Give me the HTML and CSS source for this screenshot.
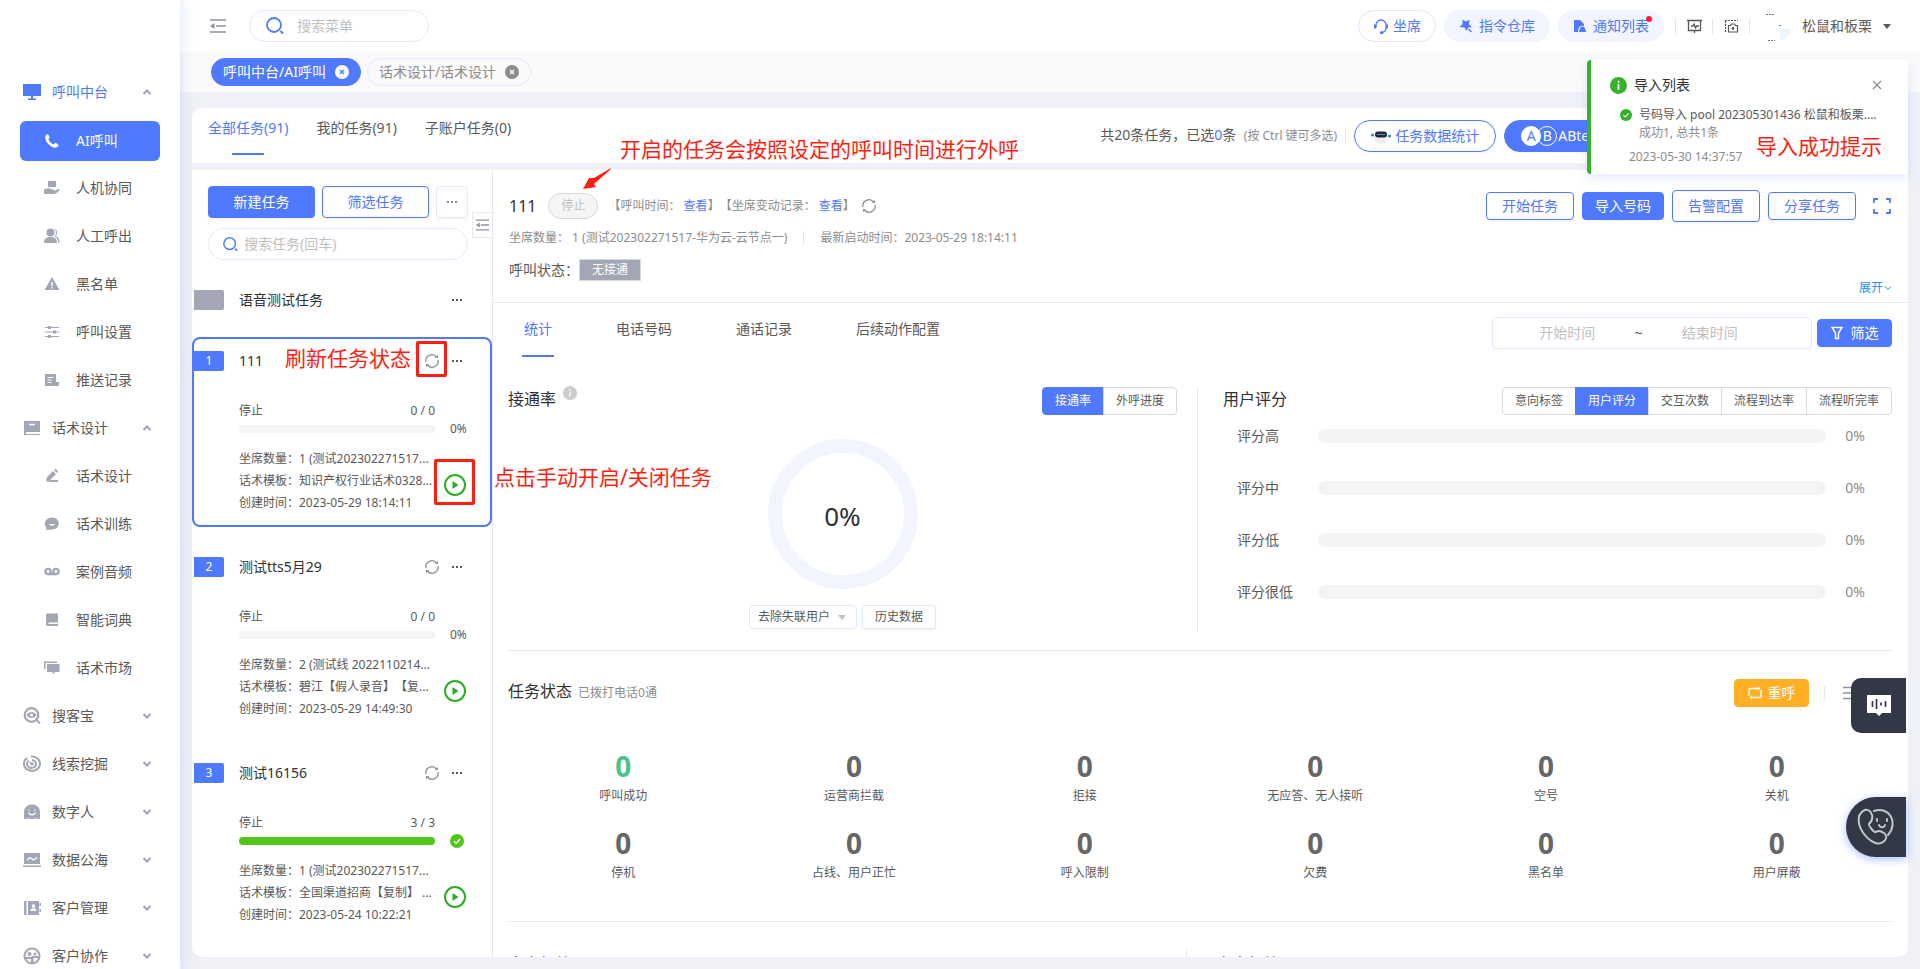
FILE: index.html
```html
<!DOCTYPE html>
<html lang="zh-CN">
<head>
<meta charset="utf-8">
<title>AI呼叫</title>
<link rel="stylesheet" href="styles.css">
</head>
<body>
<svg class="defs" aria-hidden="true">
  <symbol id="i-up" viewBox="0 0 10 10"><path d="M1.5 7 5 3.5 8.5 7" fill="none" stroke="currentColor" stroke-width="2"/></symbol>
  <symbol id="i-down" viewBox="0 0 10 10"><path d="M1.5 3 5 6.500 8.500 3" fill="none" stroke="currentColor" stroke-width="2"/></symbol>
  <symbol id="i-dots" viewBox="0 0 12 4"><path d="M1 1h2v2H1zM5 1h2v2H5zM9 1h2v2H9z" fill="currentColor"/></symbol>
  <symbol id="i-search" viewBox="0 0 18 18"><circle cx="8" cy="8" r="7" fill="none" stroke="currentColor" stroke-width="1.800"/><path d="m14.500 14 2.500 2.500" stroke="currentColor" stroke-width="2"/></symbol>
  <symbol id="i-refresh" viewBox="0 0 16 16"><path d="M2 9a6 6 0 0 1 10.500-5M14 7a6 6 0 0 1-10.500 5" fill="none" stroke="currentColor" stroke-width="1.300"/><path d="M11 4.800 14 5V2zM5 11.200 2 11v3z" fill="currentColor"/></symbol>
  <symbol id="i-fold" viewBox="0 0 16 14"><path d="M0 1h16M6 7h10M0 13h16" stroke="currentColor" stroke-width="1.600"/><path d="M4.500 4v6L0 7z" fill="currentColor"/></symbol>
  <symbol id="i-play" viewBox="0 0 22 22"><circle cx="11" cy="11" r="10" fill="none" stroke="currentColor" stroke-width="2"/><path d="M8.500 7v8l6-4z" fill="currentColor"/></symbol>
  <symbol id="i-ok" viewBox="0 0 14 14"><circle cx="7" cy="7" r="7" fill="currentColor"/><path d="m4 7.200 2.200 2.200L10 5" fill="none" stroke="#fff" stroke-width="1.300"/></symbol>
  <symbol id="i-info" viewBox="0 0 16 16"><circle cx="8" cy="8" r="8" fill="currentColor"/><path d="M7.200 3.500h1.600v1.800H7.200zM7.200 6.500h1.600V12H7.200z" fill="#fff"/></symbol>
</svg>

<div class="app">
  <nav class="sidebar">
    <a class="group group-on" href="#"><svg class="gi" viewBox="0 0 18 18"><path d="M0 1h18v12H0zM8 13h2v3H8zM5 15.500h8V17H5z" fill="currentColor"/></svg><span>呼叫中台</span><svg class="chev"><use href="#i-up"/></svg></a>
    <a class="item item-on" href="#"><svg class="si" viewBox="0 0 16 16"><path d="M1.500 2.500C2 2 3 1 3.600 1.200c.9.500 1.900 2.400 2 3.100 0 .7-1.200 1.300-1.100 2 .4 1.700 3 4.400 4.800 4.900.8.200 1.500-1.100 2.200-1.100.8.100 2.700 1.300 3 2 .2.700-.9 1.800-1.500 2.200C8.500 16.500-.5 8.500 1.500 2.500z" fill="currentColor"/></svg><span>AI呼叫</span></a>
    <a class="item" href="#"><svg class="si" viewBox="0 0 16 16"><path d="M4 1h8v6H4zM0 9h2c2-1 4-.8 5.500.5H10c1 0 1 1.500 0 1.500H6.500h4L14.500 9c1 0 1.500.8.800 1.500-2 2-3.800 3.500-5.300 3.500H0z" fill="currentColor"/></svg><span>人机协同</span></a>
    <a class="item" href="#"><svg class="si" viewBox="0 0 16 16"><circle cx="6.500" cy="4.500" r="4" fill="currentColor"/><path d="M0 15c0-4 2-6 6.500-6S13 11 13 15zM10.500 1c3 .5 3.500 5 1 7 2.500.5 4 3 4 6.500H14c0-3-1-5-3.500-6 2-2 2-5.500 0-7.500z" fill="currentColor"/></svg><span>人工呼出</span></a>
    <a class="item" href="#"><svg class="si" viewBox="0 0 16 16"><path d="m8 1 7.500 13H.5z" fill="currentColor"/><path d="M8 6v4M8 11v1.500" stroke="#fff" stroke-width="1.400"/></svg><span>黑名单</span></a>
    <a class="item" href="#"><svg class="si" viewBox="0 0 16 16"><path d="M1 3.500h14M1 8h14M1 12.500h14" stroke="currentColor" stroke-width="1.200"/><path d="M4 2h3v3H4zM9 6.500h3v3H9zM4 11h3v3H4z" fill="currentColor"/></svg><span>呼叫设置</span></a>
    <a class="item" href="#"><svg class="si" viewBox="0 0 16 16"><path d="M1 2h11v8h3v2.500c0 1-.5 1.500-1.500 1.500H1z" fill="currentColor"/><path d="M3.500 5.500h6M3.500 8h4M3.500 10.500h4" stroke="#fff"/></svg><span>推送记录</span></a>
    <a class="group" href="#"><svg class="gi" viewBox="0 0 18 18"><path d="M1 2h16v11H1z" fill="currentColor"/><path d="M1 13v3h16v-1H3v-2z" fill="currentColor"/><path d="M6 5.500h6" stroke="#fff" stroke-width="1.500"/></svg><span>话术设计</span><svg class="chev"><use href="#i-up"/></svg></a>
    <a class="item" href="#"><svg class="si" viewBox="0 0 16 16"><path d="m2 13 1-4 6-6 3 3-6 6zM10 2l1.500-1.200 2.700 2.700L13 5zM6 12h8v2H2z" fill="currentColor"/></svg><span>话术设计</span></a>
    <a class="item" href="#"><svg class="si" viewBox="0 0 16 16"><path d="M8 1.500c9 0 9 12 0 12L2 14l.5-2C-1.500 7.500 2 1.500 8 1.500z" fill="currentColor"/><path d="M5 8c1.500 2.500 4.500 2.500 6 0z" fill="#fff"/></svg><span>话术训练</span></a>
    <a class="item" href="#"><svg class="si" viewBox="0 0 16 16"><g fill="none" stroke="currentColor" stroke-width="2.400"><circle cx="4" cy="7.500" r="2.600"/><circle cx="12" cy="7.500" r="2.600"/></g><path d="M4 9h8v2.300H4z" fill="currentColor"/></svg><span>案例音频</span></a>
    <a class="item" href="#"><svg class="si" viewBox="0 0 16 16"><path d="M2 2.500C2 2 2.500 1.500 3 1.500h11v9H4.500v1.500H14V14H4c-1.500 0-2-.8-2-2z" fill="currentColor"/></svg><span>智能词典</span></a>
    <a class="item" href="#"><svg class="si" viewBox="0 0 16 16"><path d="M3 4h12.500v8H11l-1.500 2L8 12H3zM0 1.500h13V3H1.500v6H0z" fill="currentColor"/></svg><span>话术市场</span></a>
    <a class="group" href="#"><svg class="gi" viewBox="0 0 18 18"><circle cx="8.500" cy="8" r="6.800" fill="none" stroke="currentColor" stroke-width="2.200"/><path d="M3.500 8c2-4 8-4 10 0-2 4-8 4-10 0z" fill="currentColor"/><circle cx="8.500" cy="8" r="1.500" fill="#fff"/><path d="m13.500 13 3.500 3.500" stroke="currentColor" stroke-width="2"/></svg><span>搜客宝</span><svg class="chev"><use href="#i-down"/></svg></a>
    <a class="group" href="#"><svg class="gi" viewBox="0 0 18 18"><g fill="none" stroke="currentColor" stroke-width="2"><path d="M4 3a8 7.200 0 1 0 4-1.500"/><path d="M5 6.500A4.500 4 0 1 0 9 5"/></g><circle cx="9" cy="9" r="1.800" fill="currentColor"/><path d="m3 4 5 4" stroke="currentColor"/></svg><span>线索挖掘</span><svg class="chev"><use href="#i-down"/></svg></a>
    <a class="group" href="#"><svg class="gi" viewBox="0 0 18 18"><path d="M1 9c0-10 16-10 16 0v7h-3l-1.500-1L11 16H7l-1.500-1L4 16H1z" fill="currentColor"/><path d="M5.500 9.500c1.500 3 5.500 3 7 0M6 6.500v1M12 6.500v1" stroke="#fff" stroke-width="1.500" fill="none"/></svg><span>数字人</span><svg class="chev"><use href="#i-down"/></svg></a>
    <a class="group" href="#"><svg class="gi" viewBox="0 0 18 18"><path d="M1 2h16v11H1zM0 14.500h18V16H0z" fill="currentColor"/><path d="m4 9 3-2.500 3.500 2.500L14 6.500" stroke="#fff" stroke-width="1.300" fill="none"/></svg><span>数据公海</span><svg class="chev"><use href="#i-down"/></svg></a>
    <a class="group" href="#"><svg class="gi" viewBox="0 0 18 18"><path d="M1 2h2.500v14H1zM5 2h11v14H5zM16.500 4H18v3h-1.500zM16.500 10H18v3h-1.500z" fill="currentColor"/><circle cx="10.500" cy="7" r="1.700" fill="#fff"/><path d="M7.500 12c0-4 6-4 6 0z" fill="#fff"/></svg><span>客户管理</span><svg class="chev"><use href="#i-down"/></svg></a>
    <a class="group" href="#"><svg class="gi" viewBox="0 0 18 18"><circle cx="9" cy="9" r="7.500" fill="none" stroke="currentColor" stroke-width="2"/><circle cx="6.500" cy="7" r="2" fill="currentColor"/><circle cx="12" cy="7" r="1.600" fill="currentColor"/><path d="M2 11h7v6M9.500 15v-5h6" fill="none" stroke="currentColor" stroke-width="2"/></svg><span>客户协作</span><svg class="chev"><use href="#i-down"/></svg></a>
  </nav>

  <div class="page">
    <header class="topbar">
      <button class="plain fold" aria-label="收起菜单"><svg width="16" height="14"><use href="#i-fold"/></svg></button>
      <label class="search search-top"><svg width="18" height="18"><use href="#i-search"/></svg><input type="text" placeholder="搜索菜单" aria-label="搜索菜单"></label>
      <div class="tools">
        <button class="pill pill-line"><svg width="16" height="16" viewBox="0 0 16 16"><path d="M3 10V7a5 5 0 0 1 10 0v3c0 3-2 4.500-5 4.500" fill="none" stroke="currentColor" stroke-width="1.300"/><path d="M1 6.500h2v4H1zM13 6.500h2v4h-2zM7 13.500h3V16H7z" fill="currentColor"/></svg>坐席</button>
        <button class="pill"><svg width="14" height="14" viewBox="0 0 14 14"><path d="m3.500.5 3 2L11 1 9.800 5l3 3-3.600.4L7.500 12 5.500 8.500.5 8l3-3zM10 9.500l3 3-1 1-3-3z" fill="currentColor"/></svg>指令仓库</button>
        <button class="pill"><svg width="14" height="14" viewBox="0 0 14 14"><path d="M1 1h6l4 4v2C8 6 5.500 8 5.500 10L5 13H1z" fill="currentColor"/><path d="M6 12c1-1 .5-4.500 3.500-4.500S12 11 13 12v1H6z" fill="currentColor"/></svg>通知列表<i class="dot"></i></button>
        <div class="tool-icons">
          <button class="plain" aria-label="监控"><svg width="15" height="15" viewBox="0 0 15 15"><path d="M0 1.500h15M1.500 1.500v10h12v-10M4 7h2l1-2 1.500 4 1-2H12M7.500 12v2" fill="none" stroke="currentColor" stroke-width="1.300"/></svg></button>
          <button class="plain" aria-label="截图"><svg width="15" height="15" viewBox="0 0 15 15"><path d="M1 1.500h13M1.500 2v12" fill="none" stroke="currentColor" stroke-width="1.200" stroke-dasharray="2 1"/><path d="M4.500 6.500h2l1-1.500h3l1 1.500h2V13h-9z" fill="none" stroke="currentColor" stroke-width="1.200"/><circle cx="9" cy="9.500" r="1.400" fill="currentColor"/></svg></button>
        </div>
        <svg class="avatar" width="32" height="32" viewBox="0 0 32 32"><path d="M4 4.500h9M6 30.500h7M17 15.500h2" stroke="#777" stroke-dasharray="2 1"/><path d="M18 19h11c0 6-5 11-11 11z" fill="#edf5ff"/></svg>
        <button class="plain user">松鼠和板栗<i class="caret"></i></button>
      </div>
    </header>

    <div class="tags">
      <a class="tag tag-on" href="#">呼叫中台/AI呼叫<svg width="14" height="14" viewBox="0 0 14 14"><circle cx="7" cy="7" r="7" fill="#fff"/><path d="m5 5 4 4M9 5 5 9" stroke="#4f79ff" stroke-width="1.400"/></svg></a>
      <a class="tag" href="#">话术设计/话术设计<svg width="14" height="14" viewBox="0 0 14 14"><circle cx="7" cy="7" r="7" fill="#8c8c8c"/><path d="m5 5 4 4M9 5 5 9" stroke="#fff" stroke-width="1.400"/></svg></a>
    </div>

    <main class="content">
      <section class="summary">
        <div class="scope">
          <button class="plain scope-on">全部任务(91)</button>
          <button class="plain">我的任务(91)</button>
          <button class="plain">子账户任务(0)</button>
        </div>
        <p class="count">共20条任务，已选<b>0</b>条 <small>(按 Ctrl 键可多选)</small></p>
        <button class="round"><svg width="20" height="16" viewBox="0 0 20 16"><ellipse cx="10" cy="10" rx="7" ry="6" fill="#eef0f6"/><rect x="4" y="3.500" width="12" height="6" rx="3" fill="#222838"/><circle cx="1.500" cy="7" r="1.500" fill="#3478e5"/><circle cx="18.500" cy="8" r="1.500" fill="#3478e5"/><path d="M6 6.500h8" stroke="#6bb6ff" stroke-width=".7"/></svg>任务数据统计</button>
        <button class="round round-on"><span class="ab"><i>A</i><i>B</i></span>ABtest</button>
      </section>

      <div class="board">
        <aside class="tasks">
          <div class="task-bar">
            <button class="btn btn-on">新建任务</button>
            <button class="btn">筛选任务</button>
            <button class="btn btn-more" aria-label="更多"><svg width="12" height="4"><use href="#i-dots"/></svg></button>
          </div>
          <label class="search search-task"><svg width="15" height="15"><use href="#i-search"/></svg><input type="text" placeholder="搜索任务(回车)" aria-label="搜索任务"></label>
          <button class="plain collapse" aria-label="收起列表"><svg width="13" height="12"><use href="#i-fold"/></svg></button>

          <article class="task">
            <header><b class="no no-off"></b><h3>语音测试任务</h3><button class="plain" aria-label="更多"><svg width="12" height="4"><use href="#i-dots"/></svg></button></header>
          </article>
          <article class="task task-on">
            <header><b class="no">1</b><h3>111</h3><button class="plain rf" aria-label="刷新"><svg width="16" height="16"><use href="#i-refresh"/></svg></button><button class="plain" aria-label="更多"><svg width="12" height="4"><use href="#i-dots"/></svg></button></header>
            <div class="state"><span>停止</span><span>0 / 0</span></div>
            <div class="prog"><div class="track"></div><span>0%</span></div>
            <div class="info"><p>坐席数量：1 (测试202302271517...</p><p>话术模板：知识产权行业话术0328...</p><p>创建时间：2023-05-29 18:14:11</p></div>
            <button class="plain play" aria-label="启动"><svg width="22" height="22"><use href="#i-play"/></svg></button>
          </article>
          <article class="task">
            <header><b class="no">2</b><h3>测试tts5月29</h3><button class="plain rf" aria-label="刷新"><svg width="16" height="16"><use href="#i-refresh"/></svg></button><button class="plain" aria-label="更多"><svg width="12" height="4"><use href="#i-dots"/></svg></button></header>
            <div class="state"><span>停止</span><span>0 / 0</span></div>
            <div class="prog"><div class="track"></div><span>0%</span></div>
            <div class="info"><p>坐席数量：2 (测试线 2022110214...</p><p>话术模板：碧江【假人录音】【复...</p><p>创建时间：2023-05-29 14:49:30</p></div>
            <button class="plain play" aria-label="启动"><svg width="22" height="22"><use href="#i-play"/></svg></button>
          </article>
          <article class="task">
            <header><b class="no">3</b><h3>测试16156</h3><button class="plain rf" aria-label="刷新"><svg width="16" height="16"><use href="#i-refresh"/></svg></button><button class="plain" aria-label="更多"><svg width="12" height="4"><use href="#i-dots"/></svg></button></header>
            <div class="state"><span>停止</span><span>3 / 3</span></div>
            <div class="prog"><div class="track track-full"></div><svg class="done" width="14" height="14"><use href="#i-ok"/></svg></div>
            <div class="info"><p>坐席数量：1 (测试202302271517...</p><p>话术模板：全国渠道招商【复制】 ...</p><p>创建时间：2023-05-24 10:22:21</p></div>
            <button class="plain play" aria-label="启动"><svg width="22" height="22"><use href="#i-play"/></svg></button>
          </article>
        </aside>

        <section class="detail">
          <header class="head">
            <div class="head-text">
              <div class="line1"><h2>111</h2><span class="stop">停止</span><p>【呼叫时间： <a href="#">查看</a>】【坐席变动记录： <a href="#">查看</a>】</p><svg width="16" height="16"><use href="#i-refresh"/></svg></div>
              <div class="line2"><span>坐席数量： 1 (测试202302271517-华为云-云节点一)</span><i class="bar"></i><span>最新启动时间：2023-05-29 18:14:11</span></div>
              <div class="line3"><span>呼叫状态：</span><b>无接通</b></div>
            </div>
            <div class="head-side">
              <div class="acts">
                <button class="btn">开始任务</button>
                <button class="btn btn-on">导入号码</button>
                <button class="btn btn-tall">告警配置</button>
                <button class="btn">分享任务</button>
                <button class="plain full" aria-label="全屏"><svg width="18" height="16" viewBox="0 0 18 16"><path d="M1 5V1h4M13 1h4v4M17 11v4h-4M5 15H1v-4" fill="none" stroke="currentColor" stroke-width="1.800"/></svg></button>
              </div>
              <a class="expand" href="#">展开<svg width="8" height="8" viewBox="0 0 8 8"><path d="m1 2.500 3 3 3-3" fill="none" stroke="currentColor"/></svg></a>
            </div>
          </header>

          <div class="tabs">
            <button class="plain tab-on">统计</button>
            <button class="plain">电话号码</button>
            <button class="plain">通话记录</button>
            <button class="plain">后续动作配置</button>
            <div class="range"><input type="text" placeholder="开始时间" aria-label="开始时间"><span>~</span><input type="text" placeholder="结束时间" aria-label="结束时间"></div>
            <button class="btn btn-on filter"><svg width="12" height="14" viewBox="0 0 12 14"><path d="M1 1.500h10L7.500 7v5.500h-3V7z" fill="none" stroke="currentColor" stroke-width="1.500"/></svg>筛选</button>
          </div>

          <div class="charts">
            <section class="rate">
              <div class="sec-head">
                <h3>接通率</h3><svg class="tip" width="14" height="14"><use href="#i-info"/></svg>
                <div class="seg"><button class="seg-on">接通率</button><button>外呼进度</button></div>
              </div>
              <div class="ring">0%</div>
              <div class="opts">
                <label class="pick"><select aria-label="用户范围"><option>去除失联用户</option></select><i class="caret"></i></label>
                <button class="btn btn-sm">历史数据</button>
              </div>
            </section>
            <section class="score">
              <div class="sec-head">
                <h3>用户评分</h3>
                <div class="seg"><button>意向标签</button><button class="seg-on">用户评分</button><button>交互次数</button><button>流程到达率</button><button>流程听完率</button></div>
              </div>
              <dl class="bars">
                <dt>评分高</dt><dd><div class="track"></div>0%</dd>
                <dt>评分中</dt><dd><div class="track"></div>0%</dd>
                <dt>评分低</dt><dd><div class="track"></div>0%</dd>
                <dt>评分很低</dt><dd><div class="track"></div>0%</dd>
              </dl>
            </section>
          </div>

          <section class="status">
            <div class="status-head">
              <h3>任务状态</h3><small>已拨打电话0通</small>
              <button class="btn btn-warn"><svg width="14" height="14" viewBox="0 0 14 14"><path d="M1 10V4c0-1 .5-1.500 1.500-1.500H11M13 4v6c0 1-.5 1.500-1.500 1.500H3" fill="none" stroke="currentColor" stroke-width="1.400"/><path d="M10 .5v4l2.500-2zM4 9.500v4l-2.500-2z" fill="currentColor"/></svg>重呼</button>
              <i class="bar"></i>
              <button class="plain list" aria-label="列表"><svg width="16" height="14" viewBox="0 0 16 14"><path d="M0 1.500h16M0 7h16M0 12.500h16" stroke="currentColor" stroke-width="1.500"/></svg></button>
            </div>
            <div class="stats">
              <div class="good"><b>0</b><span>呼叫成功</span></div>
              <div><b>0</b><span>运营商拦截</span></div>
              <div><b>0</b><span>拒接</span></div>
              <div><b>0</b><span>无应答、无人接听</span></div>
              <div><b>0</b><span>空号</span></div>
              <div><b>0</b><span>关机</span></div>
              <div><b>0</b><span>停机</span></div>
              <div><b>0</b><span>占线、用户正忙</span></div>
              <div><b>0</b><span>呼入限制</span></div>
              <div><b>0</b><span>欠费</span></div>
              <div><b>0</b><span>黑名单</span></div>
              <div><b>0</b><span>用户屏蔽</span></div>
            </div>
          </section>

          <div class="more">
            <h3>意向标签</h3>
            <h3>客户标签</h3>
          </div>
        </section>
      </div>
    </main>
  </div>
</div>

<aside class="notice">
  <header><svg width="17" height="17"><use href="#i-info"/></svg><h3>导入列表</h3><button class="plain" aria-label="关闭"><svg width="10" height="10" viewBox="0 0 10 10"><path d="m1 1 8 8M9 1 1 9" stroke="currentColor" stroke-width="1.200"/></svg></button></header>
  <div class="notice-row"><svg width="12" height="12"><use href="#i-ok"/></svg><p>号码导入 pool 202305301436 松鼠和板栗....</p></div>
  <p class="notice-sub">成功1, 总共1条</p>
  <time>2023-05-30 14:37:57</time>
</aside>

<button class="float float-voice" aria-label="语音"><svg width="24" height="22" viewBox="0 0 24 22"><path d="M0 0h24v18h-9l-3 3-3-3H0z" fill="#fff"/><path d="M5.500 6v6M9.500 4v10M14 7.500v3M18.500 6v6" stroke="#323845" stroke-width="1.700"/></svg></button>
<button class="float float-call" aria-label="电话"><svg width="38" height="38" viewBox="0 0 38 38"><g fill="none" stroke="#c3c5cb" stroke-width="2" stroke-linecap="round"><path d="M4 5c4-5 9-4 11 2 1 4 0 6-3 9-1 1 5 9 7 8 2-2 5-1 8 1 4 3 2 7-1 9C18 41-1 23 2 9c0-1 1-3 2-4z"/><path d="M17 3c15-5 25 11 14 24"/><path d="M20 11v2M30 11v2M22 17c1 3 5 3 6 0"/></g></svg></button>

<div class="note note-time">开启的任务会按照设定的呼叫时间进行外呼</div>
<div class="note note-refresh">刷新任务状态</div>
<div class="note note-play">点击手动开启/关闭任务</div>
<div class="note note-import">导入成功提示</div>
<div class="frame frame-refresh"></div>
<div class="frame frame-play"></div>
<svg class="arrow" width="30" height="23" viewBox="0 0 30 23"><path d="M28 0 11 10 6 10 0 21 13 19 11 16 27 2z" fill="#ff1e10"/></svg>
</body>
</html>
```
FILE: styles.css
```css
* { box-sizing: border-box; }
body {
  margin: 0;
  position: relative;
  background: #eff1f6;
  color: #595959;
  font: 14px/20px "Noto Sans", "Noto Sans CJK SC", sans-serif;
  text-spacing-trim: space-all;
}
h2, h3, p, dl, dd { margin: 0; font-weight: 400; }
h3 { font-size: 14px; color: #303133; }
a { color: #4f79ff; text-decoration: none; }
svg { flex: none; display: block; }
button, input, select { font: inherit; color: inherit; }
button { white-space: nowrap; cursor: pointer; }
i, b { font-style: normal; font-weight: 400; }
input { border: 0; outline: 0; background: none; padding: 0; min-width: 0; }
input::placeholder { color: #bfbfbf; opacity: 1; }
.defs { position: absolute; width: 0; height: 0; }
.plain { border: 0; background: none; padding: 0; display: flex; align-items: center; }

.app { display: flex; height: 100vh; overflow: hidden; }

.sidebar {
  flex: none;
  width: 180px;
  padding-top: 68px;
  background: #fff;
  box-shadow: 0 0 14px rgba(79, 121, 255, .22);
  z-index: 1;
  overflow: hidden;
}
.group, .item { display: flex; align-items: center; height: 48px; color: #595959; }
.group { padding: 0 28px 0 23px; gap: 11px; }
.group-on { color: #4f79ff; }
.item { padding-left: 44px; gap: 16px; }
.item-on { height: 40px; margin: 5px 20px 3px; padding-left: 24px; border-radius: 6px; background: #4f79ff; color: #fff; }
.gi { width: 18px; height: 18px; color: #a3a6b4; }
.group-on .gi { color: #4f79ff; }
.si { width: 16px; height: 16px; color: #a3a6b4; }
.item-on .si { color: #fff; }
.chev { width: 10px; height: 10px; margin-left: auto; color: #a3a6b4; }

.page { flex: 1; min-width: 0; display: flex; flex-direction: column; }
.topbar { display: flex; align-items: center; height: 52px; padding: 0 29px 0 30px; background: #fff; flex: none; }
.fold { color: #8f929e; margin-right: 23px; }
.search { display: flex; align-items: center; height: 32px; border: 1px solid #e4eaff; border-radius: 16px; background: #fff; color: #4f79ff; }
.search input { flex: 1; width: 0; color: #595959; }
.search-top { width: 180px; padding: 0 16px; gap: 13px; }
.tools { margin-left: auto; display: flex; align-items: center; gap: 8px; }
.pill { position: relative; display: flex; align-items: center; gap: 6px; height: 32px; padding: 0 14px; border: 1px solid #f2f5ff; border-radius: 16px; background: #f2f5ff; color: #4f79ff; }
.pill-line { background: #fff; border-color: #dfe7ff; gap: 4px; }
.dot { position: absolute; top: 5px; right: 11px; width: 6px; height: 6px; border-radius: 50%; background: #f5222d; }
.tool-icons { display: flex; margin: 0 4px 0 3px; }
.tool-icons button { width: 37px; height: 16px; justify-content: center; border-left: 1px solid #e4e6eb; }
.tool-icons button:last-child { width: 38px; border-right: 1px solid #e4e6eb; }
.caret { border: 4px solid transparent; border-top: 5px solid #595959; border-bottom: 0; }
.user { gap: 11px; }

.tags { display: flex; align-items: center; gap: 6px; height: 40px; padding-left: 31px; background: #fafafa; flex: none; }
.tag { display: flex; align-items: center; gap: 9px; height: 28px; padding: 0 11px; border: 1px solid #e4eaff; border-radius: 14px; color: #8c8c8c; }
.tag-on { background: #4f79ff; border-color: #4f79ff; color: #fff; }

.content { flex: 1; min-height: 0; display: flex; flex-direction: column; gap: 7px; padding: 16px 12px 12px; }
.summary { flex: none; display: flex; align-items: center; gap: 8px; height: 55px; padding: 0 290px 0 16px; background: #fff; border-radius: 10px 10px 0 0; }
.scope { display: flex; gap: 28px; align-self: stretch; margin-right: auto; }
.scope button { position: relative; height: 47px; padding-bottom: 8px; }
.scope-on, .tab-on { color: #4f79ff; }
.scope-on::after, .tab-on::after { content: ""; position: absolute; left: 50%; bottom: 0; width: 32px; height: 2px; margin-left: -16px; background: #4f79ff; }
.count { padding-right: 8px; border-right: 1px solid #e8e8e8; line-height: 16px; }
.count b { color: #4f79ff; }
.count small { margin-left: 4px; font-size: 12px; color: #8c8c8c; }
.round { display: flex; align-items: center; gap: 4px; height: 32px; padding: 0 16px; border: 1px solid #4f79ff; border-radius: 16px; background: #fff; color: #4f79ff; box-shadow: 0 2px 2px rgba(0, 0, 0, .03); }
.round-on { background: #4f79ff; color: #fff; gap: 1px; }
.ab { display: flex; }
.ab i { width: 20px; height: 20px; border: 1px solid #fff; border-radius: 50%; line-height: 18px; text-align: center; }
.ab i:first-child { background: #fff; color: #4f79ff; margin-right: -4px; z-index: 1; }

.board { flex: 1; min-height: 0; display: flex; background: #fff; border-radius: 0 0 10px 10px; overflow: hidden; }
.tasks { flex: none; position: relative; width: 301px; border-right: 1px solid #e8e8e8; overflow: hidden; }
.task-bar { display: flex; gap: 7px; padding: 16px 24px 10px 16px; }
.task-bar .btn { flex: 1; height: 32px; }
.task-bar .btn-more { flex: none; width: 32px; padding: 0; border-color: #e4eaff; color: #8c8c8c; }
.btn { display: flex; align-items: center; justify-content: center; height: 28px; padding: 0 15px; border: 1px solid #4f79ff; border-radius: 4px; background: #fff; color: #4f79ff; box-shadow: 0 2px 2px rgba(0, 0, 0, .04); }
.btn-on { background: #4f79ff; color: #fff; }
.search-task { margin: 0 24px 16px 16px; padding: 0 14px; gap: 6px; }
.collapse { position: absolute; right: 0; top: 42px; width: 20px; height: 26px; justify-content: center; border: 1px solid #e8e8e8; border-right: 0; background: #fff; color: #8f929e; }
.task { position: relative; width: 300px; margin-bottom: 16px; padding: 12px 0 11px; border: 2px solid transparent; border-radius: 8px; }
.task:first-of-type { padding-bottom: 9px; }
.task-on { border-color: #4f79ff; }
.task header { display: flex; align-items: center; padding-right: 27px; gap: 11px; }
.task header .plain { color: #595959; }
.task header .rf { color: #8c8c8c; }
.no { width: 30px; height: 20px; margin-right: 4px; border-radius: 0 2px 2px 0; background: #4f79ff; color: #fff; font-size: 12px; text-align: center; }
.no-off { background: #a3a6b4; }
.task h3 { margin-right: auto; }
.state { display: flex; justify-content: space-between; margin: 30px 55px 0 45px; font-size: 12px; }
.prog { display: flex; align-items: center; gap: 15px; height: 20px; margin: -2px 22px 9px 45px; font-size: 12px; }
.track { flex: none; width: 196px; height: 8px; border-radius: 7px; background: #f4f4f4; }
.track-full { background: #52c41a; }
.done { color: #52c41a; }
.info { padding-left: 45px; font-size: 12px; line-height: 22px; white-space: nowrap; }
.play { position: absolute; right: 24px; bottom: 29px; color: #2bad24; }

.detail { flex: 1; min-width: 0; overflow: hidden; }
.head { display: flex; justify-content: space-between; height: 133px; padding: 20px 16px 0; border-bottom: 1px solid #e8e8e8; }
.line1, .line2, .line3 { display: flex; align-items: center; white-space: nowrap; font-size: 12px; color: #8c8c8c; }
.line1 { height: 32px; }
.line1 h2 { font-size: 16px; color: #303133; }
.line1 p { margin: 0 6px 0 10px; }
.stop { height: 26px; margin-left: 12px; padding: 0 12px; border: 1px solid #d9d9d9; border-radius: 13px; background: #f5f5f5; color: #bfbfbf; line-height: 24px; }
.line2 { height: 32px; }
.bar { width: 1px; height: 14px; margin: 0 12px; background: #e8e8e8; }
.line2 .bar { margin: 0 16px; }
.line3 { height: 32px; font-size: 14px; color: #595959; }
.line3 b { height: 22px; padding: 0 12px; border: 1px solid #d9d9d9; background: #a3a6b4; color: #fff; font-size: 12px; }
.acts { display: flex; align-items: center; gap: 8px; height: 32px; margin-right: 1px; }
.btn-tall { height: 32px; }
.acts .btn-on { padding: 0 12px; }
.full { margin-left: 9px; color: #4f79ff; }
.head-side { display: flex; flex-direction: column; align-items: flex-end; }
.expand { display: flex; align-items: center; gap: 1px; margin-top: 56px; font-size: 12px; color: #1890ff; }

.tabs { display: flex; align-items: center; height: 60px; padding: 0 16px 0 31px; gap: 64px; }
.tabs > .plain { position: relative; height: 54px; align-self: flex-start; padding-bottom: 2px; }
.range { display: flex; align-items: center; width: 320px; height: 32px; margin: 0 -59px 0 auto; padding: 0 34px 0 7px; border: 1px solid #e4eaff; border-radius: 4px; }
.range input { flex: 1; width: 0; text-align: center; }
.filter { width: 75px; padding: 0; gap: 8px; }

.charts { display: flex; margin: 24px 16px 0 15px; padding-bottom: 19px; border-bottom: 1px solid #e8e8e8; }
.rate { flex: 1; padding-right: 20px; height: 244px; border-right: 1px solid #e8e8e8; }
.score { flex: 1; padding-left: 25px; }
.sec-head { display: flex; height: 28px; align-items: center; white-space: nowrap; }
.sec-head h3, .status h3, .more h3 { font-size: 16px; }
.sec-head h3, .status h3 { padding-bottom: 4px; }
.tip { margin: 0 0 16px 7px; color: #ccc; }
.seg { display: flex; margin-left: auto; }
.seg button { height: 28px; margin-left: -1px; padding: 0 12px; border: 1px solid #d9d9d9; background: #fff; font-size: 12px; }
.seg button:first-child { border-radius: 4px 0 0 4px; }
.seg button:last-child { border-radius: 0 4px 4px 0; }
.seg .seg-on { background: #4f79ff; border-color: #4f79ff; color: #fff; }
.ring { width: 150px; height: 150px; margin: 24px auto 16px; border: 14px solid #f2f5ff; border-radius: 50%; font-size: 26px; line-height: 126px; text-align: center; color: #303133; }
.opts { display: flex; justify-content: center; gap: 5px; }
.pick { display: flex; align-items: center; width: 108px; height: 24px; padding: 0 10px 0 8px; border: 1px solid #dfe7ff; border-radius: 4px; }
.pick select { flex: 1; width: 0; border: 0; padding: 0; background: none; appearance: none; outline: 0; font-size: 12px; }
.pick .caret { border-top-color: #bfbfbf; }
.btn-sm { height: 24px; padding: 0 12px; border-color: #dfe7ff; border-radius: 2px; color: #595959; font-size: 12px; }
.bars { display: grid; grid-template-columns: 81px 1fr; row-gap: 32px; padding: 11px 0 0 14px; line-height: 20px; }
.bars dd { display: flex; align-items: center; gap: 19px; padding-right: 27px; color: #8c8c8c; }
.bars .track { flex: 1; height: 14px; }

.status { margin: 0 16px 0 15px; padding-top: 28px; border-bottom: 1px solid #e8e8e8; height: 271px; }
.status-head { display: flex; align-items: center; height: 28px; margin-bottom: 39px; padding-right: 33px; }
.status-head small { margin: 0 auto 0 6px; font-size: 12px; color: #8c8c8c; }
.status-head .bar { margin: 0 18px 0 15px; }
.list { color: #8f929e; }
.btn-warn { width: 75px; padding: 0; gap: 6px; background: #ffaf24; border-color: #ffaf24; color: #fff; }
.stats { display: grid; grid-template-columns: repeat(6, 1fr); row-gap: 17px; text-align: center; }
.stats div { display: flex; flex-direction: column; height: 60px; }
.stats b { font-size: 28px; font-weight: 700; line-height: 40px; color: #666; }
.stats .good b { color: #4ec28a; }
.stats span { font-size: 12px; line-height: 20px; }
.more { display: grid; grid-template-columns: 678px 1fr; margin: 28px 16px 0 15px; }
.more h3 { line-height: 28px; }
.more h3 + h3 { border-left: 1px solid #e8e8e8; padding-left: 29px; }

.notice { position: absolute; top: 60px; right: 12px; width: 321px; height: 114px; padding: 15px 20px 0 19px; border-left: 4px solid #35b12b; border-radius: 4px; background: #fff; box-shadow: 0 4px 12px rgba(79, 121, 255, .15); font-size: 12px; z-index: 2; }
.notice header { display: flex; align-items: center; gap: 7px; color: #35b12b; }
.notice header .plain { margin: 0 6px 0 auto; color: #8c8c8c; }
.notice-row { display: flex; align-items: center; gap: 7px; margin: 10px 0 0 10px; color: #35b12b; }
.notice-row p { color: #595959; white-space: nowrap; }
.notice-sub { margin: -2px 0 0 29px; color: #8c8c8c; }
.notice time { display: block; margin: 4px 0 0 19px; color: #8c8c8c; }

.float { position: absolute; right: 14px; display: flex; align-items: center; justify-content: center; border: 0; background: #323845; z-index: 2; }
.float-voice { top: 678px; width: 55px; height: 55px; border-radius: 10px 0 0 10px; }
.float-call { top: 797px; width: 60px; height: 60px; border-radius: 30px 0 0 30px; box-shadow: 0 2px 8px rgba(79, 121, 255, .5); }

.note { position: absolute; z-index: 3; color: #ff1e10; font-size: 21px; line-height: 28px; white-space: nowrap; }
.note-time { left: 620px; top: 135px; }
.note-refresh { left: 285px; top: 344px; }
.note-play { left: 494px; top: 463px; }
.note-import { right: 38px; top: 132px; }
.frame { position: absolute; z-index: 3; border: 3px solid #ff1e10; border-radius: 2px; }
.frame-refresh { left: 416px; top: 341px; width: 31px; height: 36px; }
.frame-play { left: 434px; top: 459px; width: 41px; height: 46px; }
.arrow { position: absolute; z-index: 3; left: 583px; top: 168px; }
```
